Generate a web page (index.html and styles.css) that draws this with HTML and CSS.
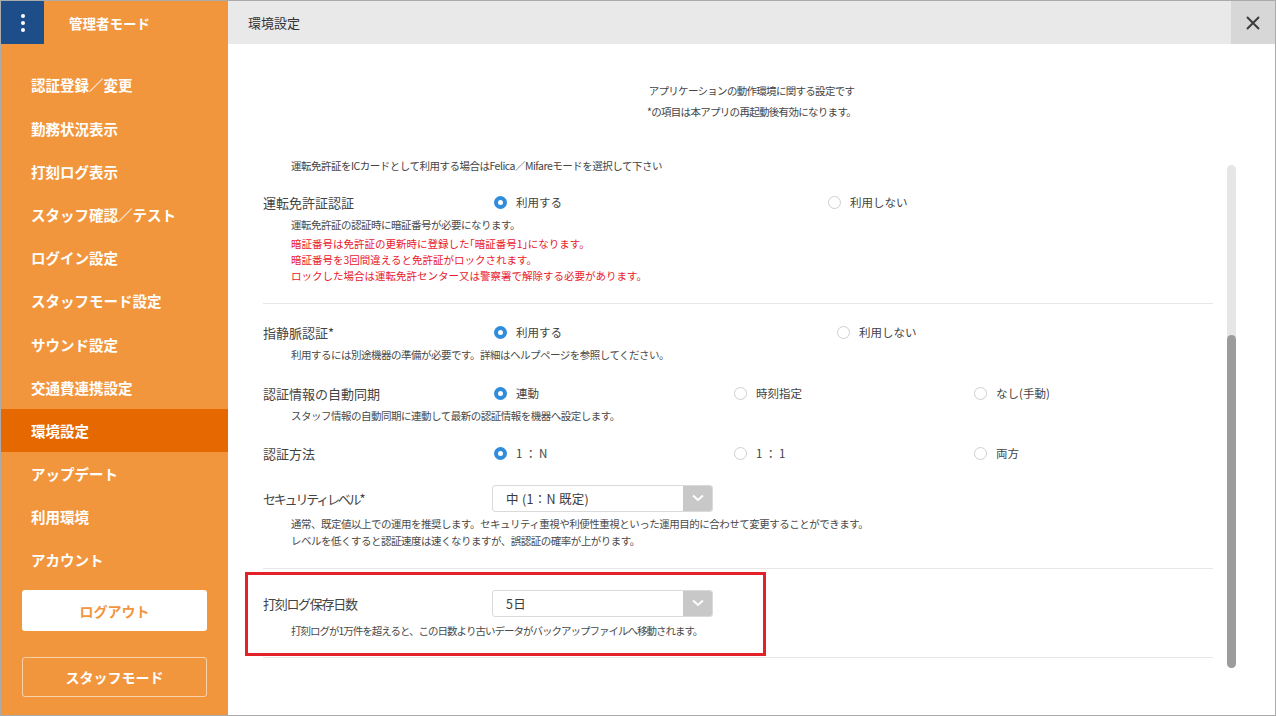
FILE: index.html
```html
<!DOCTYPE html>
<html lang="ja">
<head>
    <meta charset="UTF-8">
    <title>環境設定</title>
    <link rel="stylesheet" href="styles.css">
</head>
<body>
<div class="app">
    <aside class="sidebar">
        <div class="side-head">
            <div class="menu-btn"><span></span><span></span><span></span></div>
            <div class="side-title">管理者モード</div>
        </div>
        <nav class="side-nav">
            <div class="nav-item">認証登録／変更</div>
            <div class="nav-item">勤務状況表示</div>
            <div class="nav-item">打刻ログ表示</div>
            <div class="nav-item">スタッフ確認／テスト</div>
            <div class="nav-item">ログイン設定</div>
            <div class="nav-item">スタッフモード設定</div>
            <div class="nav-item">サウンド設定</div>
            <div class="nav-item">交通費連携設定</div>
            <div class="nav-item active">環境設定</div>
            <div class="nav-item">アップデート</div>
            <div class="nav-item">利用環境</div>
            <div class="nav-item">アカウント</div>
        </nav>
        <button class="btn-logout">ログアウト</button>
        <button class="btn-staff">スタッフモード</button>
    </aside>

    <main class="main">
        <header class="main-head">
            <div class="main-title">環境設定</div>
            <button class="close-btn">
                <svg width="16" height="16" viewBox="0 0 16 16"><path d="M2 2 L14 14 M14 2 L2 14" stroke="#3d3d3d" stroke-width="2" fill="none"/></svg>
            </button>
        </header>

        <div class="content">
            <div class="intro">
                <p>アプリケーションの動作環境に関する設定です</p>
                <p>*の項目は本アプリの再起動後有効になります。</p>
            </div>

            <div class="settings">
                <section class="group g1">
                    <p class="note">運転免許証をICカードとして利用する場合はFelica／Mifareモードを選択して下さい</p>
                    <div class="row">
                        <div class="label">運転免許証認証</div>
                        <div class="options opts-license">
                            <div class="opt"><span class="radio on"></span>利用する</div>
                            <div class="opt"><span class="radio"></span>利用しない</div>
                        </div>
                    </div>
                    <div class="desc">運転免許証の認証時に暗証番号が必要になります。</div>
                    <div class="desc warn">
                        暗証番号は免許証の更新時に登録した｢暗証番号1｣になります。<br>
                        暗証番号を3回間違えると免許証がロックされます。<br>
                        ロックした場合は運転免許センター又は警察署で解除する必要があります。
                    </div>
                </section>

                <section class="group g2">
                    <div class="row">
                        <div class="label">指静脈認証*</div>
                        <div class="options opts-vein">
                            <div class="opt"><span class="radio on"></span>利用する</div>
                            <div class="opt"><span class="radio"></span>利用しない</div>
                        </div>
                    </div>
                    <div class="desc">利用するには別途機器の準備が必要です。詳細はヘルプページを参照してください。</div>

                    <div class="row r-sync">
                        <div class="label">認証情報の自動同期</div>
                        <div class="options">
                            <div class="opt"><span class="radio on"></span>連動</div>
                            <div class="opt"><span class="radio"></span>時刻指定</div>
                            <div class="opt"><span class="radio"></span>なし(手動)</div>
                        </div>
                    </div>
                    <div class="desc">スタッフ情報の自動同期に連動して最新の認証情報を機器へ設定します。</div>

                    <div class="row r-method">
                        <div class="label">認証方法</div>
                        <div class="options">
                            <div class="opt"><span class="radio on"></span><span class="ratio">1：N</span></div>
                            <div class="opt"><span class="radio"></span><span class="ratio">1：1</span></div>
                            <div class="opt"><span class="radio"></span>両方</div>
                        </div>
                    </div>

                    <div class="row sel r-level">
                        <div class="label kana">セキュリティレベル*</div>
                        <div class="select">
                            <span class="select-text">中 (1：N 既定)</span>
                            <span class="select-arrow"><svg width="12" height="8" viewBox="0 0 12 8"><path d="M1 1.5 L6 6 L11 1.5" stroke="#fff" stroke-width="2" fill="none"/></svg></span>
                        </div>
                    </div>
                    <div class="desc d-level">
                        通常、既定値以上での運用を推奨します。セキュリティ重視や利便性重視といった運用目的に合わせて変更することができます。<br>
                        レベルを低くすると認証速度は速くなりますが、誤認証の確率が上がります。
                    </div>
                </section>

                <section class="group g3">
                    <div class="row sel">
                        <div class="label kana-mix">打刻ログ保存日数</div>
                        <div class="select">
                            <span class="select-text">5日</span>
                            <span class="select-arrow"><svg width="12" height="8" viewBox="0 0 12 8"><path d="M1 1.5 L6 6 L11 1.5" stroke="#fff" stroke-width="2" fill="none"/></svg></span>
                        </div>
                    </div>
                    <div class="desc d-log">打刻ログが1万件を超えると、この日数より古いデータがバックアップファイルへ移動されます。</div>
                    <div class="highlight"></div>
                </section>
            </div>

            <div class="scrollbar"><div class="thumb"></div></div>
        </div>
    </main>
</div>
</body>
</html>
```

FILE: styles.css
```css
* {
    box-sizing: border-box;
}

body {
    margin: 0;
    font-family: "Noto Sans CJK JP", "Noto Sans", sans-serif;
    color: #3a3a3a;
}

p {
    margin: 0;
}

.app {
    width: 1276px;
    height: 716px;
    border: 1px solid #ababab;
    display: flex;
    overflow: hidden;
}

/* sidebar */
.sidebar {
    width: 227px;
    flex: none;
    background: #f2963d;
    display: flex;
    flex-direction: column;
}

.side-head {
    height: 43px;
    display: flex;
    align-items: center;
}

.menu-btn {
    width: 43px;
    height: 43px;
    background: #1d4e89;
    display: flex;
    flex-direction: column;
    align-items: center;
    justify-content: center;
    gap: 3px;
}

.menu-btn span {
    width: 4px;
    height: 4px;
    border-radius: 50%;
    background: #fff;
}

.side-title {
    margin-left: 25px;
    color: #fff;
    font-size: 13.5px;
    font-weight: 700;
}

.side-nav {
    padding-top: 19.4px;
}

.nav-item {
    height: 43.2px;
    line-height: 43.2px;
    padding-left: 30px;
    color: #fff;
    font-size: 14.5px;
    font-weight: 700;
}

.nav-item.active {
    background: #e56900;
}

.btn-logout,
.btn-staff {
    font-family: inherit;
    font-size: 14px;
    font-weight: 700;
    width: 185px;
    margin-left: 21px;
    border-radius: 3px;
}

.btn-logout {
    margin-top: 8.5px;
    height: 41px;
    background: #fff;
    border: none;
    color: #f2963d;
}

.btn-staff {
    margin-top: 26px;
    height: 40px;
    background: transparent;
    border: 1px solid #fbd2a8;
    color: #fff;
}

/* main */
.main {
    flex: 1;
    display: flex;
    flex-direction: column;
    background: #fff;
}

.main-head {
    height: 43px;
    flex: none;
    background: #e9e9e9;
    display: flex;
    align-items: center;
}

.main-title {
    flex: 1;
    padding-left: 20px;
    font-size: 13px;
    color: #333;
}

.close-btn {
    width: 44px;
    height: 43px;
    border: none;
    background: #d7d7d7;
    display: flex;
    align-items: center;
    justify-content: center;
    padding: 0;
}

.content {
    flex: 1;
    position: relative;
}

.intro {
    padding-top: 35.5px;
    text-align: center;
    font-size: 10.5px;
    line-height: 21px;
    letter-spacing: -0.7px;
    color: #444;
}

.settings {
    margin-left: 35px;
    width: 950px;
}

.group {
    border-bottom: 1px solid #e6e6e6;
    position: relative;
}

.g1 {
    margin-top: 36.5px;
    padding-bottom: 19px;
}

.g2 {
    padding-top: 16px;
    padding-bottom: 19px;
}

.g3 {
    padding-top: 20px;
    padding-bottom: 18px;
}

.note {
    padding-left: 28px;
    font-size: 10.5px;
    line-height: 16px;
    letter-spacing: -0.5px;
    color: #444;
}

.row {
    height: 24px;
    display: flex;
    align-items: center;
}

.g1 .row {
    margin-top: 16px;
}

.row.r-sync {
    margin-top: 18px;
}

.row.r-method {
    margin-top: 17px;
}

.row.sel {
    height: 28px;
}

.row.r-level {
    margin-top: 19px;
}

.label {
    width: 231px;
    flex: none;
    font-size: 13px;
    color: #444;
}

.label.kana {
    letter-spacing: -2.2px;
}

.label.kana-mix {
    letter-spacing: -1.3px;
}

.options {
    display: flex;
}

.opt {
    width: 240px;
    display: flex;
    align-items: center;
    gap: 9px;
    font-size: 11.5px;
    color: #444;
}

.ratio {
    letter-spacing: 2.5px;
}

.opts-license .opt:first-child {
    width: 334px;
}

.opts-vein .opt:first-child {
    width: 343px;
}

.radio {
    width: 13px;
    height: 13px;
    border-radius: 50%;
    border: 1px solid #cfcfcf;
    flex: none;
}

.radio.on {
    border: 4.5px solid #2f8ddb;
}

.desc {
    margin-top: 3px;
    padding-left: 28px;
    font-size: 10.5px;
    line-height: 16px;
    letter-spacing: -0.5px;
    color: #4a4a4a;
}

.desc.warn {
    color: #e8202c;
    letter-spacing: 0;
}

.desc.d-level {
    margin-top: 4px;
    line-height: 16.5px;
}

.desc.d-log {
    margin-top: 6px;
    letter-spacing: -1px;
}

.select {
    margin-left: -2px;
    width: 221px;
    height: 27px;
    border: 1px solid #dadada;
    border-radius: 3px;
    display: flex;
    align-items: center;
    overflow: hidden;
}

.select-text {
    flex: 1;
    padding-left: 13px;
    font-size: 12.5px;
    letter-spacing: 0.3px;
    color: #3a3a3a;
}

.select-arrow {
    width: 29px;
    height: 100%;
    background: #c8c8c8;
    display: flex;
    align-items: center;
    justify-content: center;
}

.highlight {
    position: absolute;
    top: 3px;
    left: -18px;
    width: 521px;
    height: 84px;
    border: 3px solid #e3212b;
}

.scrollbar {
    position: absolute;
    left: 999px;
    top: 121px;
    width: 9px;
    height: 503px;
    border-radius: 5px;
    background: #e6e6e6;
}

.thumb {
    margin-top: 170px;
    height: 333px;
    border-radius: 5px;
    background: #9c9c9c;
}
```
